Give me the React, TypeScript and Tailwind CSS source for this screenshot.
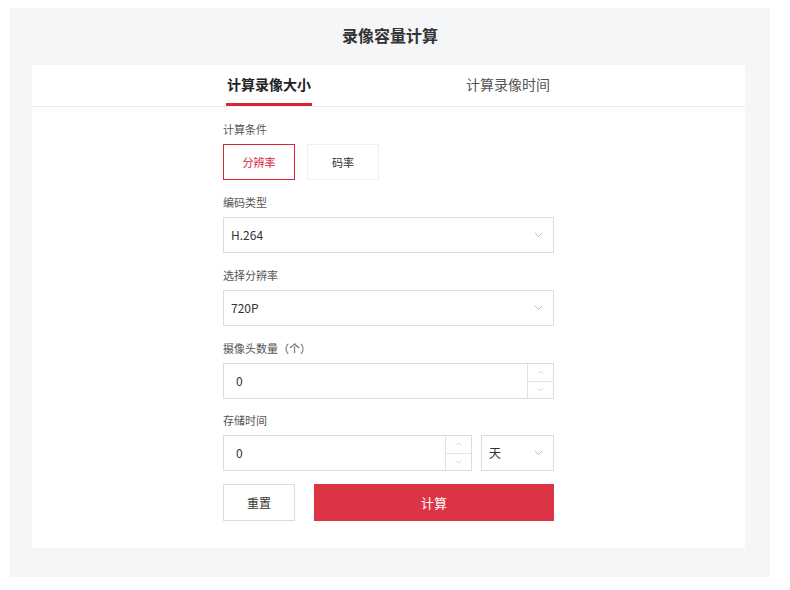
import { useState } from 'react';

const font = { fontFamily: '"Noto Sans CJK SC", "Noto Sans", sans-serif' };

const Chevron = ({ up = false, className = '' }: { up?: boolean; className?: string }) => (
    <svg viewBox="0 0 12 8" className={className} fill="none" stroke="currentColor" strokeWidth="1">
        {up ? <path d="M1 7l5-5 5 5" /> : <path d="M1 1l5 5 5-5" />}
    </svg>
);

const Label = ({ children, top = 'mt-[14px]' }: { children: React.ReactNode; top?: string }) => (
    <div className={`${top} mb-[7px] h-[16px] text-[11px] leading-[16px] text-[#555]`}>{children}</div>
);

const Select = ({ value, className = '' }: { value: string; className?: string }) => (
    <div className={`flex h-[36px] items-center justify-between border border-[#dcdcdc] bg-white pl-[7px] pr-[9px] ${className}`}>
        <span className="text-[12px] text-[#333]">{value}</span>
        <Chevron className="h-[6px] w-[11px] text-[#aaa]" />
    </div>
);

const NumberInput = ({ className = '' }: { className?: string }) => (
    <div className={`flex h-[36px] border border-[#dcdcdc] bg-white ${className}`}>
        <div className="flex flex-1 items-center pl-[12px] text-[12px] text-[#333]">0</div>
        <div className="flex w-[26px] flex-col border-l border-[#e3e3e3]">
            <div className="flex flex-1 items-center justify-center border-b border-[#e3e3e3]">
                <Chevron up className="h-[4px] w-[7px] text-[#aaa]" />
            </div>
            <div className="flex flex-1 items-center justify-center">
                <Chevron className="h-[4px] w-[7px] text-[#aaa]" />
            </div>
        </div>
    </div>
);

export default function App() {
    const [tab, setTab] = useState(0);
    const [mode, setMode] = useState(0);
    return (
        <div className="h-[590px] w-[790px] bg-white pl-[10px] pt-[8px]" style={font}>
            <div className="h-[569px] w-[760px] bg-[#f5f6f8] px-[22px]">
                {/* TITLE */}
                <div className="flex h-[57px] items-center justify-center pb-[3px] text-[16px] font-bold text-[#333]">
                    录像容量计算
                </div>
                {/* CARD */}
                <div className="h-[483px] w-[713px] bg-white">
                    <div className="flex h-[42px] justify-center border-b border-[#ececec]">
                        {['计算录像大小', '计算录像时间'].map((t, i) => (
                            <div key={t} className="flex w-[239px] justify-center" onClick={() => setTab(i)}>
                                <div
                                    className={`flex h-full items-center border-b-[3px] px-[1px] pt-[1px] text-[14px] ${
                                        tab === i
                                            ? 'border-[#d8253a] font-bold text-[#222]'
                                            : 'border-transparent text-[#555]'
                                    }`}
                                >
                                    {t}
                                </div>
                            </div>
                        ))}
                    </div>
                    <div className="mx-auto w-[331px]">
                        <Label>计算条件</Label>
                        <div className="flex gap-[12px]">
                            {['分辨率', '码率'].map((t, i) => (
                                <button
                                    key={t}
                                    onClick={() => setMode(i)}
                                    className={`h-[36px] w-[72px] border text-[11px] ${
                                        mode === i
                                            ? 'border-[#d8253a] text-[#d8253a]'
                                            : 'border-[#efefef] text-[#333]'
                                    }`}
                                >
                                    {t}
                                </button>
                            ))}
                        </div>
                        <Label>编码类型</Label>
                        <Select value="H.264" />
                        <Label>选择分辨率</Label>
                        <Select value="720P" />
                        <Label>摄像头数量（个）</Label>
                        <NumberInput />
                        <Label top="mt-[13px]">存储时间</Label>
                        <div className="flex gap-[9px]">
                            <NumberInput className="w-[249px]" />
                            <Select value="天" className="flex-1" />
                        </div>
                        <div className="mt-[13px] flex gap-[19px]">
                            <button className="h-[37px] w-[72px] border border-[#dcdcdc] text-[12px] text-[#333]">
                                重置
                            </button>
                            <button className="h-[37px] flex-1 bg-[#dc3345] text-[13px] text-white">
                                计算
                            </button>
                        </div>
                    </div>
                </div>
            </div>
        </div>
    );
}
